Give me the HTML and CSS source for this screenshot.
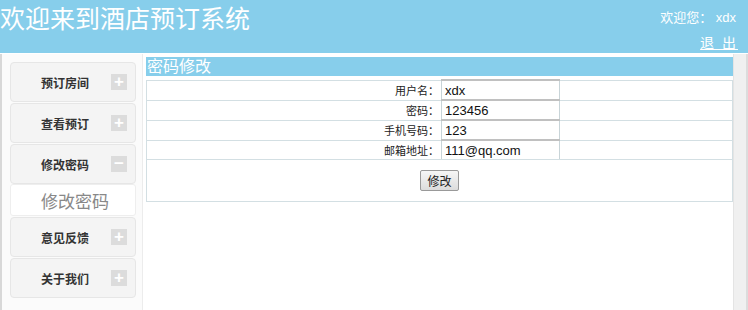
FILE: index.html
```html
<!DOCTYPE html>
<html lang="zh-CN">
<head>
  <meta charset="UTF-8" />
  <title>酒店预订系统</title>
  <link rel="stylesheet" href="styles.css">
</head>
<body>
  <div class="top">
    <h1>欢迎来到酒店预订系统</h1>
    <div class="user">
      <p>欢迎您： xdx</p>
      <a href="#">退 出</a>
    </div>
  </div>

  <div class="frame">
    <div class="left">
      <div class="menu">预订房间<span class="sign">+</span></div>
      <div class="menu">查看预订<span class="sign">+</span></div>
      <div class="menu">修改密码<span class="sign">−</span></div>
      <div class="sub">修改密码</div>
      <div class="menu">意见反馈<span class="sign">+</span></div>
      <div class="menu">关于我们<span class="sign">+</span></div>
    </div>

    <div class="main">
      <div class="caption">密码修改</div>
      <table class="form">
        <tr><td class="label">用户名：</td><td class="field">xdx</td><td></td></tr>
        <tr><td class="label">密码：</td><td class="field">123456</td><td></td></tr>
        <tr><td class="label">手机号码：</td><td class="field">123</td><td></td></tr>
        <tr><td class="label">邮箱地址：</td><td class="field">111@qq.com</td><td></td></tr>
        <tr><td colspan="3" class="submit"><button>修改</button></td></tr>
      </table>
    </div>

    <div class="scroll"></div>
  </div>
</body>
</html>
```

FILE: styles.css
```css
body {
  margin: 0;
  font-family: "Liberation Sans", "Noto Sans CJK SC", sans-serif;
  background: #fff;
  height: 310px;
  overflow: hidden;
}

.top {
  background: #87ceeb;
  height: 53px;
  display: flex;
  justify-content: space-between;
  color: #fff;
}

.top h1 {
  margin: 4px 0 0 0;
  font-size: 25px;
  font-weight: normal;
  line-height: 30px;
}

.user {
  text-align: right;
  padding-right: 12px;
  font-size: 13px;
}

.user p {
  margin: 10px 0 0 0;
  line-height: 16px;
}

.user a {
  display: inline-block;
  margin-top: 9px;
  color: #fff;
  font-size: 14px;
  line-height: 16px;
  letter-spacing: 2px;
  margin-right: -2px;
  text-decoration: underline;
}

.frame {
  display: flex;
  height: 257px;
  margin-top: 1px;
}

.left {
  width: 132px;
  padding: 8px 0 0 8px;
  background: #fbfbfb;
  border-left: 2px solid #d8d8d8;
  border-right: 1px solid #ececec;
  margin-right: 3px;
  display: flex;
  flex-direction: column;
  gap: 1px;
}

.menu {
  width: 126px;
  height: 40px;
  flex-shrink: 0;
  box-sizing: border-box;
  background: #f4f4f4;
  border: 1px solid #e6e6e6;
  border-radius: 4px;
  display: flex;
  align-items: center;
  padding-left: 30px;
  font-size: 12px;
  font-weight: bold;
  color: #333;
  position: relative;
}

.sign {
  position: absolute;
  right: 8px;
  top: 11px;
  width: 16px;
  height: 16px;
  background: #dcdcdc;
  color: #fff;
  font-size: 17px;
  line-height: 15px;
  text-align: center;
  font-weight: bold;
}

.sub {
  width: 126px;
  height: 32px;
  flex-shrink: 0;
  box-sizing: border-box;
  background: #fff;
  border: 1px solid #eeeeee;
  border-radius: 3px;
  margin-top: -1px;
  display: flex;
  align-items: center;
  padding-left: 30px;
  font-size: 17px;
  color: #888;
}

.main {
  flex: 1;
  padding-top: 3px;
}

.caption {
  background: #87ceeb;
  color: #fff;
  font-size: 16px;
  line-height: 19px;
  height: 19px;
  padding-left: 1px;
  margin-bottom: 3px;
}

.form {
  width: 100%;
  border-collapse: collapse;
  border: 1px solid #d3dfe3;
  font-size: 13px;
}

.form td {
  border-top: 1px solid #d3dfe3;
  border-bottom: 1px solid #d3dfe3;
  height: 18px;
  padding: 0;
}

.label {
  width: 292px;
  text-align: right;
  font-size: 11px;
  color: #222;
  padding-right: 2px !important;
}

.field {
  width: 114px;
  border: 1px solid #c8d4d8;
  border-top: 2px solid #c0c0c0 !important;
  padding-left: 3px !important;
  color: #111;
}

.submit {
  height: 41px !important;
  text-align: center;
}

button {
  font-family: "Liberation Sans", "Noto Sans CJK SC", sans-serif;
  font-size: 12px;
  padding: 1px 6px;
  background: linear-gradient(#f6f6f6, #dcdcdc);
  border: 1px solid #999;
  border-radius: 2px;
  color: #222;
}

.scroll {
  width: 12px;
  background: #f0f0f0;
  border-left: 1px solid #e4e4e4;
  border-right: 2px solid #dcdcdc;
}
```
